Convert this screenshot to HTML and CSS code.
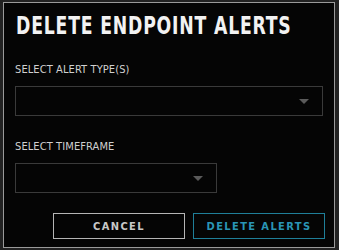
FILE: index.html
```html
<!DOCTYPE html>
<html>
<head>
<meta charset="utf-8">
<link rel="stylesheet" href="styles.css">
</head>
<body>
<div class="dialog">
  <h1 class="title">DELETE ENDPOINT ALERTS</h1>
  <div class="field">
    <div class="label">SELECT ALERT TYPE(S)</div>
    <div class="select select-wide"><span class="arrow"></span></div>
  </div>
  <div class="field field-second">
    <div class="label">SELECT TIMEFRAME</div>
    <div class="select select-narrow"><span class="arrow"></span></div>
  </div>
  <div class="actions">
    <button class="btn btn-cancel">CANCEL</button>
    <button class="btn btn-delete">DELETE ALERTS</button>
  </div>
</div>
</body>
</html>
```

FILE: styles.css
```css
html, body {
  margin: 0;
  padding: 0;
  background: #222222;
  width: 339px;
  height: 250px;
  overflow: hidden;
}
.dialog {
  box-sizing: border-box;
  margin: 2px 0 0 3px;
  width: 332px;
  height: 246px;
  border: 1px solid #9a9a9a;
  background: #050505;
  padding: 9px 11px 0 11px;
  display: flex;
  flex-direction: column;
  font-family: "DejaVu Sans Condensed", "DejaVu Sans", sans-serif;
}
.title {
  margin: 0 0 0 1px;
  font-size: 24px;
  line-height: 28px;
  font-weight: bold;
  color: #f2f2f2;
  letter-spacing: 1px;
  white-space: nowrap;
  transform: scaleX(0.8);
  transform-origin: left center;
}
.field {
  margin-top: 23px;
  display: flex;
  flex-direction: column;
}
.field-second {
  margin-top: 24px;
}
.label {
  font-size: 11px;
  line-height: 14px;
  color: #d0d0d0;
  letter-spacing: 0.1px;
}
.select {
  box-sizing: border-box;
  margin-top: 9px;
  height: 30px;
  border: 1px solid #3a3a3a;
  position: relative;
  display: flex;
  align-items: center;
  justify-content: flex-end;
  padding-right: 13px;
}
.select-wide { width: 308px; }
.select-narrow { width: 202px; }
.arrow {
  width: 0;
  height: 0;
  border-left: 5px solid transparent;
  border-right: 5px solid transparent;
  border-top: 5px solid #5a5a5a;
}
.actions {
  margin-top: 20px;
  margin-right: -2px;
  display: flex;
  justify-content: flex-end;
  gap: 8px;
}
.btn {
  box-sizing: border-box;
  width: 132px;
  height: 26px;
  background: transparent;
  font-family: "DejaVu Sans Condensed", "DejaVu Sans", sans-serif;
  font-weight: bold;
  font-size: 11px;
  letter-spacing: 1.4px;
  padding: 0;
}
.btn-cancel {
  border: 1px solid #b5b5b5;
  color: #c8c8c8;
}
.btn-delete {
  border: 1px solid #1f7f99;
  color: #2a95b5;
}
```
